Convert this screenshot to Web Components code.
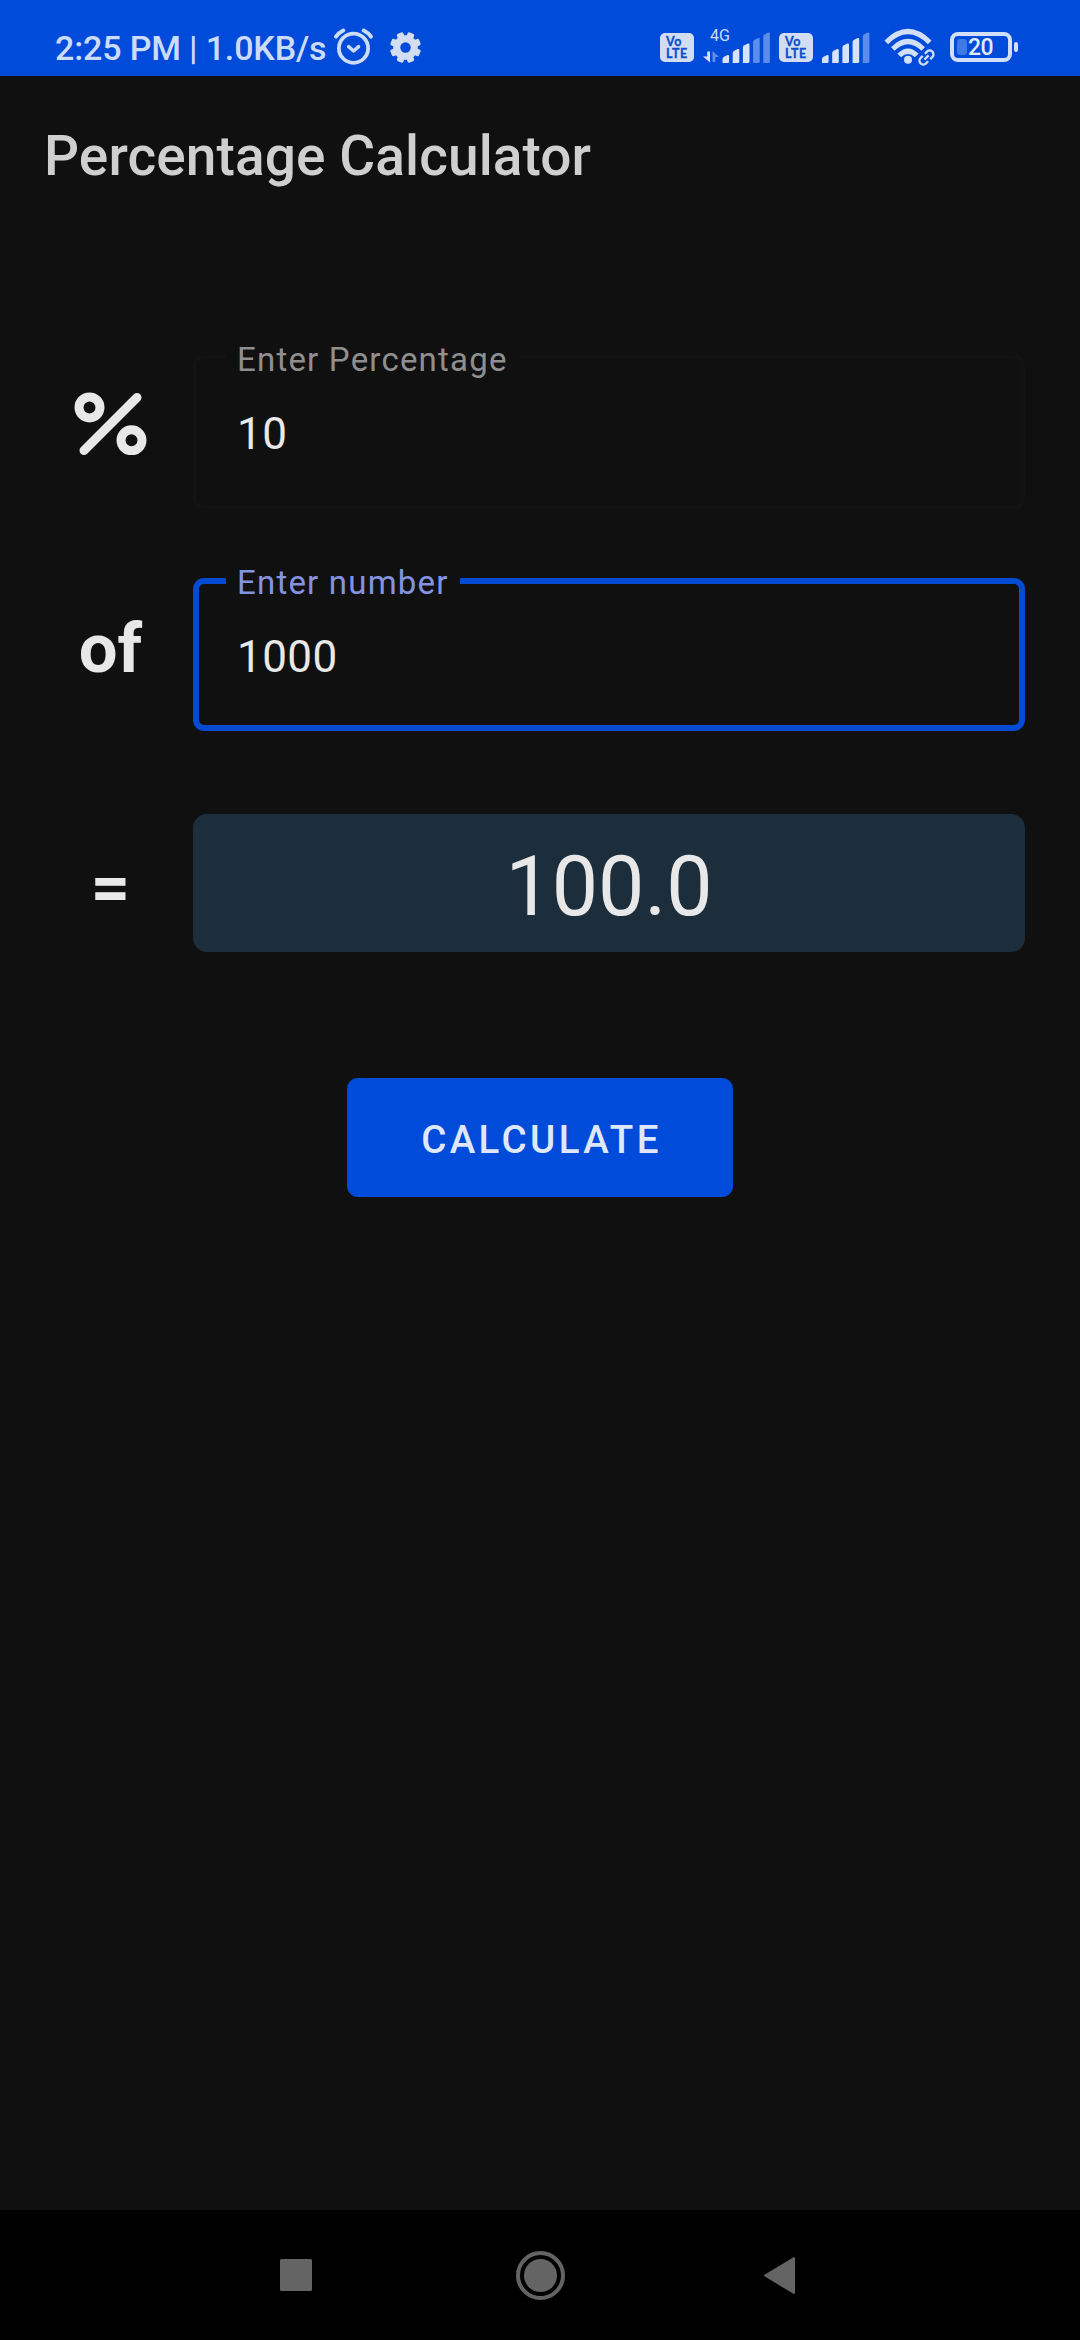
<!DOCTYPE html>
<html lang="en">
<head>
<meta charset="utf-8">
<title>Percentage Calculator</title>
<style>
  html, body { margin: 0; height: 100%; background: #101010; }
  body { font-family: Roboto, "Liberation Sans", sans-serif; color: #e8e8e8; }
</style>
</head>
<body>
<calc-app>
  <status-bar slot="status" time="2:25 PM" speed="1.0KB/s" battery="20"></status-bar>
  <app-header>Percentage Calculator</app-header>
  <calc-row style="--line: 153px">
    <percent-icon slot="sign"></percent-icon>
    <text-field label="Enter Percentage">10</text-field>
  </calc-row>
  <calc-row style="--line: 142px; margin-top: 70px">
    <span slot="sign">of</span>
    <text-field label="Enter number" focused>1000</text-field>
  </calc-row>
  <calc-row style="--line: 147px; margin-top: 83px">
    <span slot="sign">=</span>
    <result-box>100.0</result-box>
  </calc-row>
  <action-button>CALCULATE</action-button>
  <nav-bar slot="nav"></nav-bar>
</calc-app>

<script>
class BaseElement extends HTMLElement {
  constructor() {
    super();
    this.attachShadow({ mode: "open" });
  }

  connectedCallback() {
    const template = document.createElement("template");
    template.innerHTML = this.render();
    this.shadowRoot.appendChild(template.content.cloneNode(true));
  }
}

class CalcApp extends BaseElement {
  render() {
    return `
      <style>
        :host { display: flex; flex-direction: column; width: 1080px; height: 2340px; background: #101010; }
        main { flex: 1; display: flex; flex-direction: column; }
      </style>
      <slot name="status"></slot>
      <main><slot></slot></main>
      <slot name="nav"></slot>
    `;
  }
}

class StatusBar extends BaseElement {
  render() {
    return `
      <style>
        :host {
          display: flex;
          justify-content: space-between;
          height: 76px;
          box-sizing: border-box;
          padding: 0 62px 0 55px;
          background: #004bda;
          color: #ccdbf8;
        }
        .left, .right { display: flex; align-items: flex-start; }
        .clock { width: 272px; font-size: 34px; font-weight: 500; line-height: 97px; letter-spacing: -0.15px; white-space: pre; }
        alarm-icon { margin: 27px 0 0 5px; }
        gear-icon { margin: 32px 0 0 16px; }
        .second { margin-left: 9px; }
        volte-icon { margin-top: 33px; }
        .mobile { margin: 28px 0 0 8px; width: 68px; }
        .sim2 { margin-left: 9px; width: 49px; }
        wifi-icon { margin: 28px 0 0 13px; }
        battery-icon { margin: 32px 0 0 14px; }
      </style>
      <div class="left">
        <span class="clock">${this.getAttribute("time")} | ${this.getAttribute("speed")}</span>
        <alarm-icon></alarm-icon>
        <gear-icon></gear-icon>
      </div>
      <div class="right">
        <volte-icon></volte-icon>
        <signal-icon class="mobile" level="3" network="4G"></signal-icon>
        <volte-icon class="second"></volte-icon>
        <signal-icon class="mobile sim2" level="4"></signal-icon>
        <wifi-icon></wifi-icon>
        <battery-icon level="${this.getAttribute("battery")}"></battery-icon>
      </div>
    `;
  }
}

class AlarmIcon extends BaseElement {
  render() {
    return `
      <style>:host { display: block; width: 42px; height: 40px; } svg { display: block; }</style>
      <svg width="42" height="40" viewBox="0 0 42 40" fill="none" stroke="#ccdbf8" stroke-linecap="round" stroke-linejoin="round">
        <circle cx="21.500" cy="21.200" r="14.600" stroke-width="3.800"/>
        <path d="M16.600 19.700l5 4.300 5-4.300" stroke-width="3.500"/>
        <path d="M4 9.700Q7 5.500 11.300 3.500M31.700 3.500Q36 5.500 39 9.700" stroke-width="4"/>
      </svg>
    `;
  }
}

class GearIcon extends BaseElement {
  render() {
    // eight rounded teeth around a ring
    const teeth = [0, 45, 90, 135]
      .map((a) => `<rect x="12" y="0" width="7" height="31" rx="1.800" transform="rotate(${a + 22.5} 15.500 15.500)"/>`)
      .join("");

    return `
      <style>:host { display: block; width: 31px; height: 31px; } svg { display: block; }</style>
      <svg width="31" height="31" viewBox="0 0 31 31">
        <g fill="#d3ddf0">${teeth}<circle cx="15.500" cy="15.500" r="12.300"/></g>
        <circle cx="15.500" cy="15.500" r="5.200" fill="#004bda"/>
      </svg>
    `;
  }
}

class VolteIcon extends BaseElement {
  render() {
    return `
      <style>
        :host {
          display: block;
          width: 34px;
          height: 29px;
          box-sizing: border-box;
          padding: 3px 0 0 6px;
          border-radius: 5px;
          background: #d2ddf3;
          color: #0b4ecb;
          font: 700 12.5px/12px Lato, "Open Sans", sans-serif;
          letter-spacing: 0.6px;
        }
        div { white-space: nowrap; -webkit-text-stroke: 0.3px #0b4ecb; }
      </style>
      <div>Vo</div>
      <div>LTE</div>
    `;
  }
}

class SignalIcon extends BaseElement {
  render() {
    const network = this.getAttribute("network");
    const level = Number(this.getAttribute("level"));
    const start = network ? 20.5 : 0;
    const tops = [27, 21, 15.5, 10, 4.5];
    const bars = tops
      .map((top, i) => {
        const x = start + i * 10.2;
        return `<path d="M${x} 35V${top + 4}Q${x} ${top + 2.5} ${x + 1.5} ${top + 1.7}L${x + 5} ${top}Q${x + 6.6} ${top - 0.5} ${x + 6.6} ${top + 1}V33.500Q${x + 6.6} 35 ${x + 5} 35H${x + 1.500}Z" fill="${i < level ? "#d7e3fa" : "#5d8dea"}"/>`;
      })
      .join("");

    return `
      <style>
        :host { display: block; position: relative; height: 36px; }
        svg { display: block; overflow: visible; }
        .network { position: absolute; left: 8px; top: 0; font-size: 16px; line-height: 16px; }
      </style>
      <svg width="68" height="36" viewBox="0 0 68 36">
        ${bars}
        ${network ? `
          <path d="M5.200 23.500h2.800V34.500L1 28.600h4.200z" fill="#d7e3fa"/>
          <path d="M10.500 34V23l6.600 5.900h-3.700V34z" fill="#5d8dea"/>` : ""}
      </svg>
      ${network ? `<span class="network">${network}</span>` : ""}
    `;
  }
}

class WifiIcon extends BaseElement {
  render() {
    return `
      <style>:host { display: block; width: 52px; height: 40px; } svg { display: block; }</style>
      <svg width="52" height="40" viewBox="0 0 52 40" fill="none" stroke="#d2dff8">
        <path d="M2.300 14.300Q24 -7.200 45.700 14.300M8.800 21Q24 6.200 39.200 21M15.300 27.500Q24 19 32.700 27.500" stroke-width="5.200"/>
        <circle cx="24" cy="31.800" r="4" fill="#d2dff8" stroke="none"/>
        <g transform="translate(42.500 29.500) rotate(-45)" stroke-width="2.300">
          <path d="M-1.500 -3.800H-4.500A3.800 3.800 0 0 0 -4.500 3.800H-1.500M1.500 -3.800H4.500A3.800 3.800 0 0 1 4.500 3.800H1.500M-3 0H3"/>
        </g>
      </svg>
    `;
  }
}

class BatteryIcon extends BaseElement {
  render() {
    return `
      <style>
        :host { display: flex; align-items: center; gap: 2px; }
        .cell {
          display: flex;
          align-items: center;
          width: 62px;
          height: 30px;
          box-sizing: border-box;
          border: 4px solid #d2dff8;
          border-radius: 8px;
          padding-left: 3px;
        }
        .fill { width: 10px; height: 16px; border-radius: 3px; background: #3f79e6; }
        .level { margin: 2px 0 0 1px; font-size: 23px; line-height: 22px; font-weight: 500; letter-spacing: -0.5px; color: #e2ebfb; }
        .tip { width: 4px; height: 10px; border-radius: 2px; background: #d2dff8; }
      </style>
      <div class="cell"><div class="fill"></div><span class="level">${this.getAttribute("level")}</span></div>
      <div class="tip"></div>
    `;
  }
}

class AppHeader extends BaseElement {
  render() {
    return `
      <style>
        :host { display: block; height: 279px; box-sizing: border-box; padding-left: 44px; }
        h1 { margin: 0; font-size: 55px; line-height: 160px; font-weight: 500; letter-spacing: 0.1px; color: #cfcfcf; white-space: nowrap; }
      </style>
      <h1><slot></slot></h1>
    `;
  }
}

class CalcRow extends BaseElement {
  render() {
    return `
      <style>
        :host { display: grid; grid-template-columns: 165px 832px; padding: 0 55px 0 28px; }
        .sign { display: flex; justify-content: center; font-size: 68.75px; line-height: var(--line); height: 0; font-weight: 700; }
      </style>
      <div class="sign"><slot name="sign"></slot></div>
      <slot></slot>
    `;
  }
}

class PercentIcon extends BaseElement {
  render() {
    return `
      <style>:host { display: block; margin-top: 36px; } svg { display: block; }</style>
      <svg width="74" height="64" viewBox="0 0 74 64" fill="none" stroke="#e8e8e8" stroke-width="9">
        <circle cx="15.500" cy="16.400" r="10.500"/>
        <circle cx="57.500" cy="49.300" r="10.500"/>
        <path d="M63 6.500L10 59.500" stroke-linecap="round"/>
      </svg>
    `;
  }
}

class TextField extends BaseElement {
  render() {
    return `
      <style>
        :host {
          --border: 3px;
          --outline: #131313;
          --label: #8f8f8f;
          --legend: 39px;
          --label-line: 45px;
          --value-top: 28px;
          --box: 154px;
          display: block;
          height: 153px;
        }
        :host([focused]) {
          --border: 6px;
          --outline: #034bd2;
          --label: #8493e0;
          --legend: 38px;
          --label-line: 41px;
          --value-top: 27px;
          --box: 153px;
        }
        fieldset {
          margin: calc((var(--border) - var(--legend)) / 2) 0 0;
          height: calc(var(--box) + (var(--legend) - var(--border)) / 2);
          box-sizing: border-box;
          min-width: 0;
          padding: 0;
          border: var(--border) solid var(--outline);
          border-radius: 11px;
        }
        legend {
          height: var(--legend);
          margin-left: calc(33px - var(--border));
          padding: 0 11px;
          font-size: 33px;
          line-height: var(--label-line);
          letter-spacing: 1.2px;
          color: var(--label);
        }
        .value {
          padding: var(--value-top) 0 0 calc(44px - var(--border));
          font-size: 44px;
          line-height: 60px;
          letter-spacing: 0.4px;
        }
      </style>
      <fieldset>
        <legend>${this.getAttribute("label")}</legend>
        <div class="value"><slot></slot></div>
      </fieldset>
    `;
  }
}

class ResultBox extends BaseElement {
  render() {
    return `
      <style>
        :host {
          display: block;
          height: 138px;
          border-radius: 14px;
          background: #1c2d3b;
          font-size: 82.5px;
          line-height: 145px;
          text-align: center;
        }
      </style>
      <slot></slot>
    `;
  }
}

class ActionButton extends BaseElement {
  render() {
    return `
      <style>
        :host { display: block; align-self: center; margin-top: 126px; }
        button {
          display: block;
          width: 386px;
          height: 119px;
          padding: 0 0 0 3px;
          border: 0;
          border-radius: 11px;
          background: #004bda;
          color: #dfe8fa;
          font: 500 38.5px/123px Roboto, "Liberation Sans", sans-serif;
          letter-spacing: 3.4px;
        }
      </style>
      <button><slot></slot></button>
    `;
  }
}

class NavBar extends BaseElement {
  render() {
    return `
      <style>
        :host { display: flex; justify-content: center; align-items: center; gap: 194px; height: 130px; background: #000; }
        svg { display: block; }
      </style>
      <svg width="50" height="50" viewBox="0 0 50 50"><rect x="9" y="9" width="32" height="32" rx="1.500" fill="#646464"/></svg>
      <svg width="50" height="50" viewBox="0 0 50 50">
        <circle cx="25.500" cy="25.500" r="22.500" fill="none" stroke="#646464" stroke-width="4"/>
        <circle cx="25.500" cy="25.500" r="16.500" fill="#646464"/>
      </svg>
      <svg width="50" height="50" viewBox="0 0 50 50"><path d="M6 25.500L35 8v35z" fill="#646464" stroke="#646464" stroke-width="2" stroke-linejoin="round"/></svg>
    `;
  }
}

customElements.define("alarm-icon", AlarmIcon);
customElements.define("gear-icon", GearIcon);
customElements.define("volte-icon", VolteIcon);
customElements.define("signal-icon", SignalIcon);
customElements.define("wifi-icon", WifiIcon);
customElements.define("battery-icon", BatteryIcon);
customElements.define("percent-icon", PercentIcon);
customElements.define("status-bar", StatusBar);
customElements.define("app-header", AppHeader);
customElements.define("calc-row", CalcRow);
customElements.define("text-field", TextField);
customElements.define("result-box", ResultBox);
customElements.define("action-button", ActionButton);
customElements.define("nav-bar", NavBar);
customElements.define("calc-app", CalcApp);
</script>
</body>
</html>
